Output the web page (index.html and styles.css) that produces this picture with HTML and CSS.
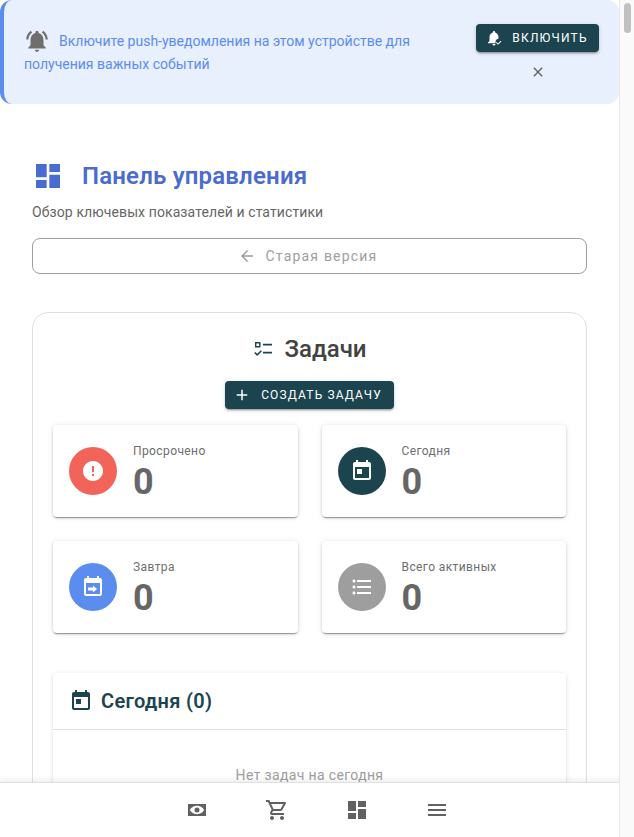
FILE: index.html
```html
<!DOCTYPE html>
<html lang="ru">
<head>
<meta charset="utf-8">
<title>Панель управления</title>
<link rel="stylesheet" href="styles.css">
</head>
<body>
<div class="viewport">
  <main class="page">
    <section class="banner">
      <p class="banner-text">
        <svg class="banner-bell" viewBox="0 0 24 24"><path d="M7.58 4.08L6.15 2.65C3.75 4.48 2.17 7.3 2.03 10.5h2c.15-2.65 1.51-4.97 3.55-6.42zm12.39 6.42h2c-.15-3.2-1.73-6.02-4.12-7.85l-1.42 1.43c2.02 1.45 3.39 3.77 3.54 6.42zM18 11c0-3.07-1.64-5.64-4.5-6.32V4c0-.83-.67-1.5-1.5-1.5s-1.5.67-1.5 1.5v.68C7.63 5.36 6 7.92 6 11v5l-2 2v1h16v-1l-2-2v-5zm-6 11c.14 0 .27-.01.4-.04.65-.14 1.18-.58 1.44-1.18.1-.24.15-.5.15-.78h-4c.01 1.1.9 2 2.01 2z"/></svg>Включите push-уведомления на этом устройстве для получения важных событий
      </p>
      <div class="banner-actions">
        <button class="btn btn-enable">
          <svg class="btn-icon" viewBox="0 0 24 24"><path d="M12 2.5c-.83 0-1.5.67-1.5 1.5v.68C7.63 5.36 6 7.92 6 11v5l-2 2v1h10.2a5.5 5.5 0 0 1 3.8-6.5V11c0-3.07-1.64-5.64-4.5-6.32V4c0-.83-.67-1.5-1.5-1.5zM12 22c1.1 0 2-.9 2-2h-4c0 1.1.9 2 2 2zM21 15.6l-3.6 3.6-1.9-1.9-.9.9 2.8 2.8 4.5-4.5z"/></svg>
          Включить
        </button>
        <svg class="close-icon" viewBox="0 0 24 24"><path d="M19 6.41L17.59 5 12 10.59 6.41 5 5 6.41 10.59 12 5 17.59 6.41 19 12 13.41 17.59 19 19 17.59 13.41 12z"/></svg>
      </div>
    </section>

    <div class="content">
      <header class="head">
        <svg class="head-icon" viewBox="0 0 24 24"><path d="M3 13h8V3H3v10zm0 8h8v-6H3v6zm10 0h8V11h-8v10zm0-18v6h8V3h-8z"/></svg>
        <h1 class="head-title">Панель управления</h1>
      </header>
      <p class="subtitle">Обзор ключевых показателей и статистики</p>
      <button class="old-version">
        <svg class="old-icon" viewBox="0 0 24 24"><path d="M20 11H7.83l5.59-5.59L12 4l-8 8 8 8 1.41-1.41L7.83 13H20v-2z"/></svg>
        Старая версия
      </button>

      <section class="tasks">
        <h2 class="tasks-title">
          <svg class="tasks-icon" viewBox="0 0 24 24"><path fill-rule="evenodd" d="M3 5h5.5v5.5H3V5zm1.4 1.4v2.7h2.7V6.4H4.4zM11 6.7h9v1.7h-9V6.7zm0 8h9v1.7h-9v-1.7zM2.2 16l1.1-1.1 1.9 1.9 3.6-3.6 1.1 1.1-4.7 4.7-3-3z"/></svg>
          Задачи
        </h2>
        <button class="btn btn-create">
          <svg class="btn-icon" viewBox="0 0 24 24"><path d="M19 13h-6v6h-2v-6H5v-2h6V5h2v6h6v2z"/></svg>
          Создать задачу
        </button>

        <div class="stats">
          <article class="stat">
            <span class="stat-circle red"><svg viewBox="0 0 24 24"><path d="M12 2C6.48 2 2 6.48 2 12s4.48 10 10 10 10-4.48 10-10S17.52 2 12 2zm1 15h-2v-2h2v2zm0-4h-2V7h2v6z"/></svg></span>
            <div class="stat-body"><div class="stat-label">Просрочено</div><div class="stat-value">0</div></div>
          </article>
          <article class="stat">
            <span class="stat-circle teal"><svg viewBox="0 0 24 24"><path d="M19 3h-1V1h-2v2H8V1H6v2H5c-1.11 0-1.99.9-1.99 2L3 19c0 1.1.89 2 2 2h14c1.1 0 2-.9 2-2V5c0-1.1-.9-2-2-2zm0 16H5V8h14v11zM7 10h5v5H7z"/></svg></span>
            <div class="stat-body"><div class="stat-label">Сегодня</div><div class="stat-value">0</div></div>
          </article>
          <article class="stat">
            <span class="stat-circle blue"><svg viewBox="0 0 24 24"><path d="M19 3h-1V1h-2v2H8V1H6v2H5c-1.11 0-1.99.9-1.99 2L3 19c0 1.1.89 2 2 2h14c1.1 0 2-.9 2-2V5c0-1.1-.9-2-2-2zm0 16H5V8h14v11zM7 12.6h5V10.5l4 3.5-4 3.5v-2.1H7z"/></svg></span>
            <div class="stat-body"><div class="stat-label">Завтра</div><div class="stat-value">0</div></div>
          </article>
          <article class="stat">
            <span class="stat-circle grey"><svg viewBox="0 0 24 24"><path d="M4 10.5c-.83 0-1.5.67-1.5 1.5s.67 1.5 1.5 1.5 1.5-.67 1.5-1.5-.67-1.5-1.5-1.5zm0-6c-.83 0-1.5.67-1.5 1.5S3.17 7.5 4 7.5 5.5 6.83 5.5 6 4.83 4.5 4 4.5zm0 12c-.83 0-1.5.68-1.5 1.5s.68 1.5 1.5 1.5 1.5-.68 1.5-1.5-.67-1.5-1.5-1.5zM7 19h14v-2H7v2zm0-6h14v-2H7v2zm0-8v2h14V5H7z"/></svg></span>
            <div class="stat-body"><div class="stat-label">Всего активных</div><div class="stat-value">0</div></div>
          </article>
        </div>

        <section class="today">
          <h3 class="today-head">
            <svg class="today-icon" viewBox="0 0 24 24"><path d="M19 3h-1V1h-2v2H8V1H6v2H5c-1.11 0-1.99.9-1.99 2L3 19c0 1.1.89 2 2 2h14c1.1 0 2-.9 2-2V5c0-1.1-.9-2-2-2zm0 16H5V8h14v11zM7 10h5v5H7z"/></svg>
            Сегодня (0)
          </h3>
          <p class="today-empty">Нет задач на сегодня</p>
        </section>
      </section>
    </div>
  </main>

  <div class="scrollbar"><span class="scrollbar-thumb"></span></div>

  <nav class="bottom-nav">
    <svg class="nav-icon" viewBox="0 0 24 24"><path fill-rule="evenodd" d="M3 6h18v12H3V6zm9 1.8c-3.6 0-6.4 2.4-7 4.2.6 1.8 3.4 4.2 7 4.2s6.4-2.4 7-4.2c-.6-1.8-3.4-4.2-7-4.2zm0 1.7a2.5 2.5 0 1 1 0 5 2.5 2.5 0 0 1 0-5z"/></svg>
    <svg class="nav-icon" viewBox="0 0 24 24"><path d="M15.55 13c.75 0 1.41-.41 1.75-1.03l3.58-6.49c.37-.66-.11-1.48-.87-1.48H5.21l-.94-2H1v2h2l3.6 7.59-1.35 2.44C4.52 15.37 5.48 17 7 17h12v-2H7l1.1-2h7.45zM6.16 6h12.15l-2.76 5H8.53L6.16 6zM7 18c-1.1 0-1.99.9-1.99 2S5.9 22 7 22s2-.9 2-2-.9-2-2-2zm10 0c-1.1 0-1.99.9-1.99 2s.89 2 1.99 2 2-.9 2-2-.9-2-2-2z"/></svg>
    <svg class="nav-icon" viewBox="0 0 24 24"><path d="M3 13h8V3H3v10zm0 8h8v-6H3v6zm10 0h8V11h-8v10zm0-18v6h8V3h-8z"/></svg>
    <svg class="nav-icon" viewBox="0 0 24 24"><path d="M3 18h18v-2H3v2zm0-5h18v-2H3v2zm0-7v2h18V6H3z"/></svg>
  </nav>
</div>
</body>
</html>
```

FILE: styles.css
```css
* { box-sizing: border-box; }
html, body { margin: 0; height: 100%; overflow: hidden; background: #fff; }
body { font-family: Roboto, "Noto Sans", sans-serif; color: #424242; }
svg { display: block; fill: currentColor; flex: none; }
h1, h2, h3, p { margin: 0; }

.viewport { position: relative; display: flex; height: 837px; overflow: hidden; }
.page { flex: 1; min-width: 0; height: 837px; overflow: hidden; }

.banner {
  display: flex; justify-content: space-between; align-items: center; gap: 16px;
  height: 104px; padding: 0 20px;
  background: #e8effd; border-left: 4px solid #5b8def; border-radius: 12px;
}
.banner-text { width: 400px; padding-top: 1px; font-size: 14px; line-height: 23px; color: #5b8def; }
.banner-bell { display: inline-block; width: 26px; height: 26px; margin: -6px 9px -4px 0; vertical-align: middle; color: #6e6e6e; }
.banner-actions { display: flex; flex-direction: column; align-items: center; gap: 12px; }
.close-icon { width: 16px; height: 16px; color: #616161; }

.btn {
  display: inline-flex; align-items: center; justify-content: center;
  border: 0; border-radius: 4px; background: #1c444f; color: #fff;
  font-family: inherit; font-weight: 400; text-transform: uppercase;
  box-shadow: 0 3px 1px -2px rgba(0,0,0,.2), 0 2px 2px rgba(0,0,0,.14), 0 1px 5px rgba(0,0,0,.12);
}
.btn-enable { width: 123px; height: 28px; padding: 0 2px 0 0; font-size: 12px; letter-spacing: 1.2px; gap: 9px; }
.btn-create { width: 169px; height: 28px; padding: 0 4px 0 0; font-size: 12px; letter-spacing: 1.15px; gap: 10px; margin: 16px auto 0; }
.btn-icon { width: 18px; height: 18px; }

.content { padding: 56px 32px 0; }
.head { display: flex; align-items: center; gap: 18px; height: 32px; }
.head-icon { width: 32px; height: 32px; color: #4a6bd0; }
.head-title { font-size: 24px; font-weight: 600; color: #4a6bd0; line-height: 32px; letter-spacing: .18px; }
.subtitle { margin-top: 10px; font-size: 14px; line-height: 20px; color: #666; letter-spacing: .1px; }

.old-version {
  display: flex; align-items: center; justify-content: center; gap: 10px;
  width: 100%; height: 36px; margin-top: 16px; padding: 0 4px 0 0;
  border: 1px solid #9e9e9e; border-radius: 8px; background: #fff;
  font-family: inherit; font-size: 14px; font-weight: 400; letter-spacing: 1.2px; color: #9e9e9e;
}
.old-icon { width: 18px; height: 18px; }

.tasks { display: flex; flex-direction: column; margin-top: 38px; padding: 20px; border: 1px solid #e0e0e0; border-radius: 16px; }
.tasks-title { display: flex; align-items: center; justify-content: center; gap: 8px; height: 32px; font-size: 24px; font-weight: 500; color: #424242; }
.tasks-icon { width: 24px; height: 24px; color: #1c444f; }

.stats { display: grid; grid-template-columns: 1fr 1fr; gap: 24px; margin-top: 16px; }
.stat { display: flex; align-items: center; gap: 16px; height: 92px; padding: 0 16px; background: #fff; border-radius: 4px;
  box-shadow: 0 2px 1px -1px rgba(0,0,0,.3), 0 1px 3px rgba(0,0,0,.2), 0 0 8px rgba(0,0,0,.06); }
.stat-circle { display: flex; align-items: center; justify-content: center; width: 48px; height: 48px; border-radius: 50%; color: #fff; flex: none; }
.stat-circle svg { width: 24px; height: 24px; }
.red { background: #f2635a; }
.teal { background: #1c444f; }
.blue { background: #5b8def; }
.grey { background: #9e9e9e; }
.stat-body { padding-top: 3px; }
.stat-label { font-size: 12px; line-height: 16px; letter-spacing: .4px; color: #6e6e6e; }
.stat-value { margin-top: 3px; font-size: 36px; font-weight: 700; line-height: 40px; color: #666; }

.today { margin-top: 40px; background: #fff; border-radius: 4px;
  box-shadow: 0 2px 1px -1px rgba(0,0,0,.2), 0 1px 1px rgba(0,0,0,.14), 0 1px 5px rgba(0,0,0,.12); }
.today-head { display: flex; align-items: center; gap: 8px; height: 57px; padding: 0 16px; border-bottom: 1px solid #e0e0e0; font-size: 20px; font-weight: 600; letter-spacing: .3px; color: #1c444f; }
.today-icon { width: 24px; height: 24px; }
.today-empty { padding: 37px 16px; text-align: center; font-size: 14px; font-weight: 400; letter-spacing: .35px; color: #9e9e9e; }

.scrollbar { flex: none; position: relative; z-index: 2; width: 15px; height: 837px; padding: 3px 3px 0 4px; background: #fafafa; border-left: 1px solid #e8e8e8; }
.scrollbar-thumb { display: block; height: 30px; border-radius: 4px; background: #c1c1c1; }

.bottom-nav {
  position: absolute; left: 0; right: 0; bottom: 0; z-index: 1;
  display: flex; justify-content: center; align-items: center; gap: 56px;
  height: 55px; background: #fff; border-top: 1px solid #e0e0e0;
  box-shadow: 0 -2px 6px rgba(0,0,0,.08);
}
.nav-icon { width: 24px; height: 24px; color: #616161; }
```
